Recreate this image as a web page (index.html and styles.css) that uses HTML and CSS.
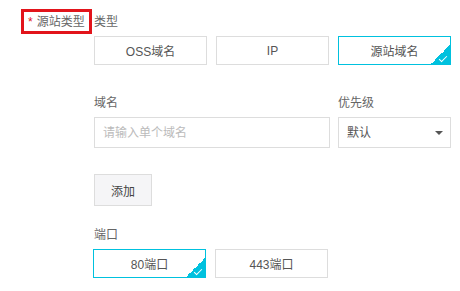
FILE: index.html
```html
<!DOCTYPE html>
<html lang="zh-CN">
<head>
  <meta charset="UTF-8" />
  <title>源站类型</title>
  <link rel="stylesheet" href="styles.css">
</head>
<body>
  <div class="form">
    <div class="type-head">
      <span class="mark-box"><span class="required">*</span>源站类型</span>
      <span class="label">类型</span>
    </div>

    <div class="fields">
      <!-- Origin type -->
      <div class="choices">
        <button class="choice">OSS域名</button>
        <button class="choice">IP</button>
        <button class="choice active">源站域名<span class="tick"></span></button>
      </div>

      <!-- Domain + priority -->
      <div class="domain-row">
        <div class="field field-wide">
          <div class="label">域名</div>
          <input class="input" type="text" placeholder="请输入单个域名">
        </div>
        <div class="field">
          <div class="label">优先级</div>
          <div class="select">默认<span class="caret"></span></div>
        </div>
      </div>

      <button class="btn-add">添加</button>

      <!-- Port -->
      <div class="label label-port">端口</div>
      <div class="choices ports">
        <button class="choice active">80端口<span class="tick"></span></button>
        <button class="choice">443端口</button>
      </div>
    </div>
  </div>
</body>
</html>
```

FILE: styles.css
```css
* {
  margin: 0;
  padding: 0;
  box-sizing: border-box;
}

body {
  background: #fff;
  color: #333;
  font-family: "Liberation Sans", "Noto Sans CJK SC", sans-serif;
  font-size: 12px;
  line-height: 16px;
}

.form {
  padding: 9px 0 0 21px;
}

.type-head {
  display: flex;
  align-items: center;
}

.mark-box {
  width: 71px;
  height: 25px;
  border: 3px solid #e2141b;
  color: #666;
  display: flex;
  align-items: center;
  padding-left: 4px;
}

.required {
  color: #e2141b;
  margin-right: 4px;
}

.label {
  color: #666;
}

.type-head .label {
  margin-left: 2px;
}

.fields {
  padding-left: 73px;
  width: 431px;
}

.choices {
  display: grid;
  grid-template-columns: repeat(3, 113px);
  gap: 9px;
  margin-top: 2px;
}

.choice {
  position: relative;
  height: 29px;
  background: #fff;
  border: 1px solid #ddd;
  color: #555;
  font-family: inherit;
  font-size: 12px;
  overflow: hidden;
}

.choice.active {
  border-color: #00c1de;
}

.tick {
  position: absolute;
  right: 0;
  bottom: 0;
  width: 19px;
  height: 19px;
  background: linear-gradient(to bottom right, transparent 50%, #00c1de 50%);
}

.tick::after {
  content: "";
  position: absolute;
  right: 3px;
  bottom: 4px;
  width: 7px;
  height: 3px;
  border-left: 1.5px solid #fff;
  border-bottom: 1.5px solid #fff;
  transform: rotate(-45deg);
}

.domain-row {
  display: flex;
  gap: 8px;
  margin-top: 30px;
}

.field {
  width: 113px;
}

.field-wide {
  width: 236px;
}

.field .label {
  margin-bottom: 6px;
}

.input,
.select {
  width: 100%;
  height: 31px;
  border: 1px solid #ddd;
  font-family: inherit;
  font-size: 12px;
  padding: 0 8px;
  color: #555;
}

.input::placeholder {
  color: #bbb;
}

.select {
  position: relative;
  display: flex;
  align-items: center;
}

.caret {
  position: absolute;
  right: 7px;
  top: 13px;
  border-left: 4px solid transparent;
  border-right: 4px solid transparent;
  border-top: 4px solid #555;
}

.btn-add {
  display: block;
  margin-top: 26px;
  width: 58px;
  height: 32px;
  background: #f5f5f7;
  border: 1px solid #ddd;
  color: #444;
  font-family: inherit;
  font-size: 12px;
}

.label-port {
  margin-top: 21px;
}

.ports {
  margin-top: 6px;
  margin-left: -1px;
}
```
